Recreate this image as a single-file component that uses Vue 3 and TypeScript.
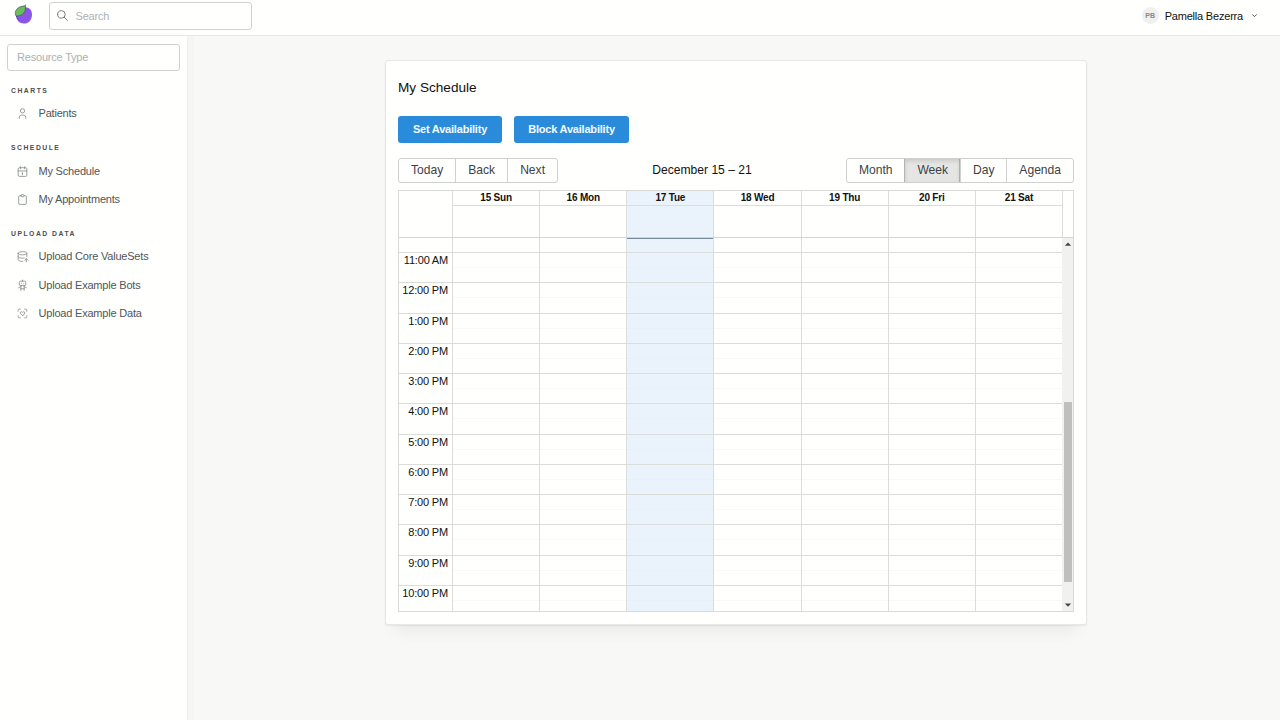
<script setup lang="ts">
interface NavItem { label: string; icon: string[] }
interface NavSection { title: string; items: NavItem[] }

const sections: NavSection[] = [
  {
    title: 'Charts',
    items: [
      { label: 'Patients', icon: ['M8 7a4 4 0 1 0 8 0a4 4 0 0 0 -8 0', 'M6 21v-2a4 4 0 0 1 4 -4h4a4 4 0 0 1 4 4v2'] },
    ],
  },
  {
    title: 'Schedule',
    items: [
      { label: 'My Schedule', icon: ['M4 5m0 2a2 2 0 0 1 2 -2h12a2 2 0 0 1 2 2v12a2 2 0 0 1 -2 2h-12a2 2 0 0 1 -2 -2z', 'M16 3v4', 'M8 3v4', 'M4 11h16', 'M11 15h1', 'M12 15v3'] },
      { label: 'My Appointments', icon: ['M9 5h-2a2 2 0 0 0 -2 2v12a2 2 0 0 0 2 2h10a2 2 0 0 0 2 -2v-12a2 2 0 0 0 -2 -2h-2', 'M9 5a2 2 0 0 1 2 -2h2a2 2 0 0 1 2 2a2 2 0 0 1 -2 2h-2a2 2 0 0 1 -2 -2'] },
    ],
  },
  {
    title: 'Upload Data',
    items: [
      { label: 'Upload Core ValueSets', icon: ['M4 6c0 1.657 3.582 3 8 3s8 -1.343 8 -3s-3.582 -3 -8 -3s-8 1.343 -8 3', 'M4 6v6c0 1.657 3.582 3 8 3c1.118 0 2.183 -.086 3.15 -.241', 'M20 12v-6', 'M4 12v6c0 1.657 3.582 3 8 3c.157 0 .312 -.002 .466 -.005', 'M19 22v-6', 'M22 19l-3 -3l-3 3'] },
      { label: 'Upload Example Bots', icon: ['M6 4m0 2a2 2 0 0 1 2 -2h8a2 2 0 0 1 2 2v4a2 2 0 0 1 -2 2h-8a2 2 0 0 1 -2 -2z', 'M12 2v2', 'M9 12v9', 'M15 12v9', 'M5 16l4 -2', 'M15 14l4 2', 'M9 18h6', 'M10 8v.01', 'M14 8v.01'] },
      { label: 'Upload Example Data', icon: ['M4 8v-2a2 2 0 0 1 2 -2h2', 'M4 16v2a2 2 0 0 0 2 2h2', 'M16 4h2a2 2 0 0 1 2 2v2', 'M16 20h2a2 2 0 0 0 2 -2v-2', 'M12 16l-3.5 -3.6a2.2 2.2 0 0 1 0 -3a2.1 2.1 0 0 1 3 0l.5 .5l.5 -.5a2.1 2.1 0 0 1 3 0a2.2 2.2 0 0 1 0 3z'] },
    ],
  },
]

const days: string[] = ['15 Sun', '16 Mon', '17 Tue', '18 Wed', '19 Thu', '20 Fri', '21 Sat']
const today = 2
const hours: string[] = ['11:00 AM', '12:00 PM', '1:00 PM', '2:00 PM', '3:00 PM', '4:00 PM', '5:00 PM', '6:00 PM', '7:00 PM', '8:00 PM', '9:00 PM', '10:00 PM']
const views: string[] = ['Month', 'Week', 'Day', 'Agenda']
const activeView = 'Week'
</script>

<template>
  <div class="app">
    <header class="topbar">
      <svg class="logo" viewBox="0 0 20 20">
        <path d="M10.6 3.4C15.6 2.4 19 5.6 19 10.4C19 15.4 16 19.4 11.4 19.5C6.6 19.7 3.2 16.2 3 11.5C2.8 7.6 5.6 4.2 10.6 3.4Z" fill="#8b55e8" />
        <path d="M12 5C12 3 12 1.8 12.6 .6" stroke="#3c5a3a" stroke-width=".9" fill="none" />
        <path d="M3 12C.6 7 4.4 2.2 12.2 1.8C13.4 7.6 9.8 12.4 3 12Z" fill="#6aba60" stroke="#40663d" stroke-width=".7" />
        <path d="M3.4 12Q4.4 14.6 6.4 16.4" stroke="#342467" stroke-width=".9" fill="none" stroke-dasharray="1.2 1.4" />
      </svg>
      <div class="search">
        <svg class="glass" viewBox="0 0 24 24"><path d="M3 10a7 7 0 1 0 14 0a7 7 0 1 0 -14 0M21 21l-6 -6" /></svg>
        <span>Search</span>
      </div>
      <div class="user">
        <span class="avatar">PB</span>
        <span class="name">Pamella Bezerra</span>
        <svg class="chevron" viewBox="0 0 24 24"><path d="M6 9l6 6l6 -6" /></svg>
      </div>
    </header>

    <div class="body">
      <nav class="sidebar">
        <div class="resource">Resource Type</div>
        <section v-for="s in sections" :key="s.title" class="group">
          <h2>{{ s.title }}</h2>
          <a v-for="item in s.items" :key="item.label" class="link">
            <svg viewBox="0 0 24 24"><path v-for="d in item.icon" :key="d" :d="d" /></svg>
            <span>{{ item.label }}</span>
          </a>
        </section>
      </nav>

      <main class="main">
        <div class="card">
          <h1>My Schedule</h1>
          <div class="actions">
            <button class="primary set">Set Availability</button>
            <button class="primary block">Block Availability</button>
          </div>
          <div class="toolbar">
            <div class="btns nav">
              <button>Today</button><button>Back</button><button>Next</button>
            </div>
            <div class="range">December 15 – 21</div>
            <div class="btns views">
              <button v-for="v in views" :key="v" :class="{ active: v === activeView }">{{ v }}</button>
            </div>
          </div>

          <div class="calendar">
            <div class="cal-head">
              <div class="gutter"></div>
              <div v-for="(d, i) in days" :key="d" class="head-day" :class="{ today: i === today }">
                <div class="day-name">{{ d }}</div>
              </div>
              <div class="head-end"></div>
            </div>
            <div class="cal-body">
              <div class="gutter times">
                <div class="lead"></div>
                <div v-for="h in hours" :key="h" class="hour">{{ h }}</div>
              </div>
              <div v-for="(d, i) in days" :key="d" class="col" :class="{ today: i === today }">
                <div class="lead"></div>
                <div v-for="h in hours" :key="h" class="hour"><div class="half"></div></div>
              </div>
              <div class="scrollbar">
                <svg viewBox="0 0 10 10"><path d="M1.8 6.7L5 3.5L8.2 6.7Z" /></svg>
                <div class="thumb"></div>
                <svg viewBox="0 0 10 10"><path d="M1.8 3.5L5 6.7L8.2 3.5Z" /></svg>
              </div>
            </div>
          </div>
        </div>
      </main>
    </div>
  </div>
</template>

<style>
body { margin: 0; overflow: hidden; }
</style>

<style scoped>
* { box-sizing: border-box; }
.app {
  width: 1280px; height: 720px; display: flex; flex-direction: column; overflow: hidden;
  font-family: "Liberation Sans", Arial, sans-serif; font-size: 11px; letter-spacing: -.2px; color: #111; background: #f8f9f6;
}
.topbar {
  height: 36px; flex: none; display: flex; align-items: center; padding: 0 21px 4px 13px;
  background: #fffffd; border-bottom: 1px solid #e6e7e4;
}
.logo { width: 20px; height: 20px; margin-top: -3px; }
.search {
  width: 203px; height: 28px; margin-left: 16px; border: 1px solid #cfd2cf; border-radius: 3px;
  display: flex; align-items: center; color: #adb1b3;
}
.glass { width: 13px; height: 13px; margin: 0 6.5px 0 6px; fill: none; stroke: #777a7a; stroke-width: 1.8; stroke-linecap: round; }
.user { margin-left: auto; display: flex; align-items: center; }
.avatar {
  width: 17px; height: 17px; border-radius: 50%; background: #f0f1ef; color: #83888b; letter-spacing: 0;
  font-size: 7px; font-weight: 700; display: flex; align-items: center; justify-content: center;
}
.name { margin-left: 6px; }
.chevron { width: 9px; height: 9px; margin-left: 7px; fill: none; stroke: #444; stroke-width: 2.4; }

.body { flex: 1; display: flex; min-height: 0; }
.sidebar { width: 188px; flex: none; padding: 8px 7px; background: #fffffd; border-right: 1px solid #f0f1ef; }
.resource {
  width: 173px; height: 27px; border: 1px solid #cfd2cf; border-radius: 3px; padding: 0 0 1px 9px;
  display: flex; align-items: center; color: #adb1b3;
}
.group { padding-bottom: .7px; }
.group h2 {
  margin: 0; padding: 14.8px 0 0 4px; height: 28.4px; font-size: 6.8px; line-height: 9px; font-weight: 700;
  letter-spacing: 1.5px; text-transform: uppercase; color: #494e52;
}
.resource + .group h2 { height: 27.9px; }
.link { display: flex; align-items: center; height: 28.4px; padding-left: 9px; color: #50555a; }
.link svg { width: 13px; height: 13px; margin: 1px 9.5px 0 0; fill: none; stroke: #858a8c; stroke-width: 1.5; stroke-linecap: round; stroke-linejoin: round; }

.main { flex: 1; padding: 24px 0 0 191px; border-left: 6px solid #f4f5f4; }
.card {
  width: 702px; height: 565px; padding: 0 12px; background: #fffffd; border: 1px solid #e7e9e6; border-radius: 3px;
  box-shadow: 0 1px 2px rgba(0, 0, 0, .07), 0 18px 14px -10px rgba(0, 0, 0, .05);
  display: flex; flex-direction: column;
}
h1 { margin: 18px 0 0; font-size: 13.6px; line-height: 17px; font-weight: 400; letter-spacing: 0; }
button { font-family: inherit; margin: 0; padding: 0; }
.actions { display: flex; gap: 12px; margin-top: 20px; }
.primary { height: 27px; padding-bottom: 1px; border: 0; border-radius: 3px; background: #2b8bdb; color: #f4fbff; font-size: 11px; letter-spacing: -.2px; font-weight: 700; }
.set { width: 104px; }
.block { width: 115px; }
.toolbar { display: flex; align-items: center; margin-top: 15px; height: 24px; font-size: 12.1px; letter-spacing: 0; width: 676px; }
.btns { display: flex; height: 25px; border: 1px solid #cfd1ce; border-radius: 3px; overflow: hidden; flex: none; }
.btns button { border: 0; border-left: 1px solid #cfd1ce; background: none; color: #3d4245; font-size: 12.1px; flex: 1 1 auto; padding-bottom: 1px; }
.btns button:first-child { border-left: 0; }
.nav { width: 160px; }
.views { width: 228px; }
.btns .active { background: #e5e6e4; box-shadow: inset 0 2px 4px rgba(0, 0, 0, .13), inset -1px 0 0 #b8bab7; border-color: #b2b4b2; }
.range { flex: 1; text-align: center; color: #111; }

.calendar { margin-top: 8px; width: 676px; height: 422px; border: 1px solid #d8dad7; display: flex; flex-direction: column; overflow: hidden; }
.cal-head { height: 47px; flex: none; display: flex; border-bottom: 1px solid #d3d5d2; }
.gutter { width: 53px; flex: none; }
.head-day { flex: 1; border-left: 1px solid #dbddda; }
.day-name { height: 15px; line-height: 13px; text-align: center; font-weight: 700; font-size: 10px; letter-spacing: -.2px; border-bottom: 1px solid #dbddda; }
.head-end { width: 11px; border-left: 1px solid #dbddda; }
.today { background: #eaf3fb; }
.cal-body { flex: 1; display: flex; min-height: 0; overflow: hidden; }
.col { flex: 1; border-left: 1px solid #dbddda; }
.lead { height: 14px; }
.col.today .lead { border-top: 1px solid #74899a; }
.hour { height: 30.25px; border-top: 1px solid #dbddda; }
.times .hour { text-align: right; padding: 1px 4px 0 0; line-height: 13px; letter-spacing: -.18px; }
.half { height: 15px; border-bottom: 1px solid #f8f9f6; }
.today .half { border-color: #e8f1f9; }
.scrollbar { width: 11px; background: #f1f2f0; display: flex; flex-direction: column; align-items: center; padding: 1px 0 1px 1px; }
.scrollbar svg { width: 10px; height: 10px; fill: #484848; flex: none; }
.thumb { width: 8px; height: 180px; margin: 153px 0 auto; background: #bfc0bd; flex: none; }
</style>
